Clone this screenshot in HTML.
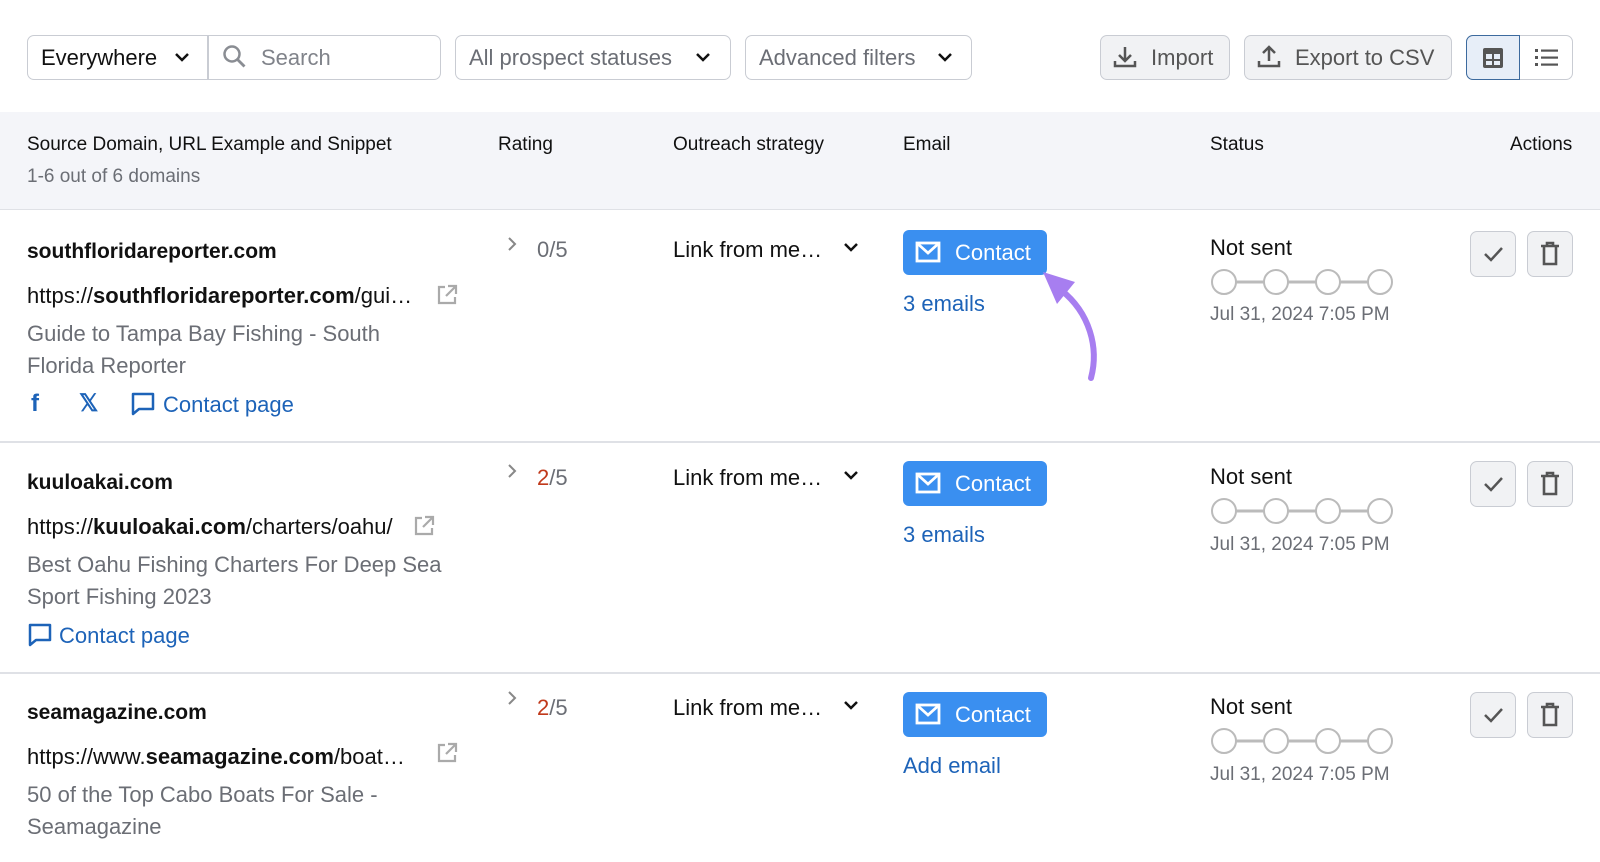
<!DOCTYPE html>
<html><head><meta charset="utf-8"><style>
*{box-sizing:border-box;margin:0;padding:0}
body{width:1600px;height:862px;overflow:hidden;background:#fff;font-family:"Liberation Sans",Arial,sans-serif;position:relative;color:#111}
.a{position:absolute;white-space:nowrap}
.box{position:absolute;border:1.5px solid #c9ccd3;border-radius:7px;background:#fff}
.btn{position:absolute;border:1.5px solid #c9ccd3;border-radius:7px;background:#f1f2f4}
.hdr{position:absolute;left:0;top:112px;width:1600px;height:98px;background:#f4f5f9;border-bottom:1.5px solid #dfe1e6}
.h{font-size:19px;color:#111}
.line{position:absolute;left:0;width:1600px;height:1.5px;background:#dfe1e6}
.dom{font-size:21px;font-weight:bold}
.url{font-size:22px}
.snip{font-size:22px;color:#6b6e75;line-height:32px;white-space:normal}
.link{color:#1d63b8;font-size:22px}
.contact{position:absolute;width:144px;height:45px;background:#3a8ff0;border-radius:6px;color:#fff;font-size:22px}
.dots{position:absolute;width:186px;height:28px}
.act{position:absolute;width:46px;height:46px;border:1.5px solid #c9ccd3;border-radius:7px;background:#f1f2f4}
.gray{color:#6b6e75}
</style></head><body>

<!-- toolbar -->
<div class="box" style="left:27px;top:35px;width:414px;height:45px"></div>
<div class="a" style="left:207px;top:36px;width:1.5px;height:43px;background:#c9ccd3"></div>
<div class="a" style="left:41px;top:45px;font-size:22px">Everywhere</div>
<svg class="a" style="left:173px;top:50px" width="18" height="14"><path d="M3 4l6 6 6-6" stroke="#111" stroke-width="2.5" fill="none"/></svg>
<svg class="a" style="left:222px;top:44px" width="26" height="26"><circle cx="10" cy="10" r="7.5" stroke="#8a8d93" stroke-width="2.5" fill="none"/><path d="M15.5 15.5l7 7" stroke="#8a8d93" stroke-width="2.8"/></svg>
<div class="a gray" style="left:261px;top:45px;font-size:22px;color:#80838a">Search</div>

<div class="box" style="left:455px;top:35px;width:276px;height:45px"></div>
<div class="a" style="left:469px;top:45px;font-size:22px;color:#6b6e75">All prospect statuses</div>
<svg class="a" style="left:694px;top:50px" width="18" height="14"><path d="M3 4l6 6 6-6" stroke="#111" stroke-width="2.5" fill="none"/></svg>

<div class="box" style="left:745px;top:35px;width:227px;height:45px"></div>
<div class="a" style="left:759px;top:45px;font-size:22px;color:#6b6e75">Advanced filters</div>
<svg class="a" style="left:936px;top:50px" width="18" height="14"><path d="M3 4l6 6 6-6" stroke="#111" stroke-width="2.5" fill="none"/></svg>

<div class="btn" style="left:1100px;top:35px;width:130px;height:45px"></div>
<svg class="a" style="left:1112px;top:44px" width="26" height="26"><path d="M13 3v13M7 11l6 6 6-6M3 17v5h20v-5" stroke="#555" stroke-width="2.5" fill="none"/></svg>
<div class="a" style="left:1151px;top:45px;font-size:22px;color:#555">Import</div>

<div class="btn" style="left:1244px;top:35px;width:208px;height:45px"></div>
<svg class="a" style="left:1256px;top:44px" width="26" height="26"><path d="M13 17V4M7 9l6-6 6 6M3 17v5h20v-5" stroke="#555" stroke-width="2.5" fill="none"/></svg>
<div class="a" style="left:1295px;top:45px;font-size:22px;color:#555">Export to CSV</div>

<div class="box" style="left:1466px;top:35px;width:107px;height:45px"></div>
<div class="a" style="left:1466px;top:35px;width:54px;height:45px;background:#e7eef8;border:1.5px solid #3c6a9e;border-radius:7px 0 0 7px"></div>
<svg class="a" style="left:1481px;top:46px" width="24" height="24"><rect x="2" y="2" width="20" height="20" rx="2" fill="#555"/><rect x="5" y="8" width="6" height="5" fill="#e7eef8"/><rect x="13" y="8" width="6" height="5" fill="#e7eef8"/><rect x="5" y="15" width="6" height="4" fill="#e7eef8"/><rect x="13" y="15" width="6" height="4" fill="#e7eef8"/></svg>
<svg class="a" style="left:1534px;top:46px" width="26" height="24"><g fill="#555"><rect x="1" y="3" width="3" height="3"/><rect x="1" y="10" width="3" height="3"/><rect x="1" y="17" width="3" height="3"/><rect x="7" y="3.5" width="17" height="2.2"/><rect x="7" y="10.5" width="17" height="2.2"/><rect x="7" y="17.5" width="17" height="2.2"/></g></svg>

<!-- header -->
<div class="hdr"></div>
<div class="a h" style="left:27px;top:134px">Source Domain, URL Example and Snippet</div>
<div class="a h gray" style="left:27px;top:166px;color:#6b6e75">1-6 out of 6 domains</div>
<div class="a h" style="left:498px;top:134px">Rating</div>
<div class="a h" style="left:673px;top:134px">Outreach strategy</div>
<div class="a h" style="left:903px;top:134px">Email</div>
<div class="a h" style="left:1210px;top:134px">Status</div>
<div class="a h" style="left:1510px;top:134px">Actions</div>

<div class="line" style="top:441px"></div>
<div class="line" style="top:672px"></div>

<!-- ROW 1 -->
<div class="a dom" style="left:27px;top:240px">southfloridareporter.com</div>
<div class="a url" style="left:27px;top:283px">https://<b>southfloridareporter.com</b>/gui…</div>
<svg class="a" style="left:435px;top:283px" width="24" height="24"><path d="M10 4H4v16h16v-6M13 3h8v8M21 3l-10 10" stroke="#aaa" stroke-width="2.2" fill="none"/></svg>
<div class="a snip" style="left:27px;top:318px;width:405px">Guide to Tampa Bay Fishing - South Florida Reporter</div>
<div class="a" style="left:31px;top:390px;font-size:24px;font-weight:bold;color:#1d63b8">f</div>
<div class="a" style="left:79px;top:389px;font-size:24px;font-weight:bold;color:#1d63b8">𝕏</div>
<svg class="a" style="left:130px;top:391px" width="26" height="26"><path d="M3 3h20v15H9l-6 5z" stroke="#1d63b8" stroke-width="2.5" fill="none" stroke-linejoin="round"/></svg>
<div class="a link" style="left:163px;top:392px">Contact page</div>

<!-- ROW 2 -->
<div class="a dom" style="left:27px;top:471px">kuuloakai.com</div>
<div class="a url" style="left:27px;top:514px">https://<b>kuuloakai.com</b>/charters/oahu/</div>
<svg class="a" style="left:412px;top:514px" width="24" height="24"><path d="M10 4H4v16h16v-6M13 3h8v8M21 3l-10 10" stroke="#aaa" stroke-width="2.2" fill="none"/></svg>
<div class="a snip" style="left:27px;top:549px;width:440px">Best Oahu Fishing Charters For Deep Sea Sport Fishing 2023</div>
<svg class="a" style="left:27px;top:622px" width="26" height="26"><path d="M3 3h20v15H9l-6 5z" stroke="#1d63b8" stroke-width="2.5" fill="none" stroke-linejoin="round"/></svg>
<div class="a link" style="left:59px;top:623px">Contact page</div>

<!-- ROW 3 -->
<div class="a dom" style="left:27px;top:701px">seamagazine.com</div>
<div class="a url" style="left:27px;top:744px">https://www.<b>seamagazine.com</b>/boat…</div>
<svg class="a" style="left:435px;top:741px" width="24" height="24"><path d="M10 4H4v16h16v-6M13 3h8v8M21 3l-10 10" stroke="#aaa" stroke-width="2.2" fill="none"/></svg>
<div class="a snip" style="left:27px;top:779px;width:420px">50 of the Top Cabo Boats For Sale - Seamagazine</div>

<!-- rating -->
<svg class="a" style="left:506px;top:235px" width="12" height="18"><path d="M3 3l6 6-6 6" stroke="#888" stroke-width="2" fill="none"/></svg>
<div class="a" style="left:537px;top:237px;font-size:22px;color:#6b6e75">0/5</div>
<svg class="a" style="left:506px;top:462px" width="12" height="18"><path d="M3 3l6 6-6 6" stroke="#888" stroke-width="2" fill="none"/></svg>
<div class="a" style="left:537px;top:465px;font-size:22px;color:#6b6e75"><span style="color:#c0391b">2</span>/5</div>
<svg class="a" style="left:506px;top:689px" width="12" height="18"><path d="M3 3l6 6-6 6" stroke="#888" stroke-width="2" fill="none"/></svg>
<div class="a" style="left:537px;top:695px;font-size:22px;color:#6b6e75"><span style="color:#c0391b">2</span>/5</div>

<!-- strategy -->
<div class="a" style="left:673px;top:237px;font-size:22px">Link from me…</div>
<svg class="a" style="left:842px;top:240px" width="18" height="14"><path d="M3 4l6 6 6-6" stroke="#111" stroke-width="2.5" fill="none"/></svg>
<div class="a" style="left:673px;top:465px;font-size:22px">Link from me…</div>
<svg class="a" style="left:842px;top:468px" width="18" height="14"><path d="M3 4l6 6 6-6" stroke="#111" stroke-width="2.5" fill="none"/></svg>
<div class="a" style="left:673px;top:695px;font-size:22px">Link from me…</div>
<svg class="a" style="left:842px;top:698px" width="18" height="14"><path d="M3 4l6 6 6-6" stroke="#111" stroke-width="2.5" fill="none"/></svg>

<!-- contact buttons -->
<div class="contact" style="left:903px;top:230px"><svg class="a" style="left:12px;top:11px" width="26" height="22"><rect x="2" y="2" width="22" height="18" stroke="#fff" stroke-width="2.8" fill="none"/><path d="M3 3l10 9 10-9" stroke="#fff" stroke-width="2.8" fill="none"/></svg><span class="a" style="left:52px;top:10px">Contact</span></div>
<div class="a link" style="left:903px;top:291px">3 emails</div>
<div class="contact" style="left:903px;top:461px"><svg class="a" style="left:12px;top:11px" width="26" height="22"><rect x="2" y="2" width="22" height="18" stroke="#fff" stroke-width="2.8" fill="none"/><path d="M3 3l10 9 10-9" stroke="#fff" stroke-width="2.8" fill="none"/></svg><span class="a" style="left:52px;top:10px">Contact</span></div>
<div class="a link" style="left:903px;top:522px">3 emails</div>
<div class="contact" style="left:903px;top:692px"><svg class="a" style="left:12px;top:11px" width="26" height="22"><rect x="2" y="2" width="22" height="18" stroke="#fff" stroke-width="2.8" fill="none"/><path d="M3 3l10 9 10-9" stroke="#fff" stroke-width="2.8" fill="none"/></svg><span class="a" style="left:52px;top:10px">Contact</span></div>
<div class="a link" style="left:903px;top:753px">Add email</div>

<!-- arrow -->
<svg class="a" style="left:1035px;top:268px" width="70" height="115"><path d="M56 110C64 80 55 45 26 22" stroke="#a77ef0" stroke-width="6" fill="none" stroke-linecap="round"/><path d="M8 4L40 14 22 36z" fill="#a77ef0"/></svg>

<!-- status -->
<div class="a" style="left:1210px;top:235px;font-size:22px">Not sent</div>
<svg class="a dots" style="left:1210px;top:268px"><path d="M26 14h28M78 14h28M130 14h28" stroke="#bbb" stroke-width="3"/><g stroke="#bbb" stroke-width="2" fill="#fff"><circle cx="14" cy="14" r="12"/><circle cx="66" cy="14" r="12"/><circle cx="118" cy="14" r="12"/><circle cx="170" cy="14" r="12"/></g></svg>
<div class="a" style="left:1210px;top:304px;font-size:19px;color:#6b6e75">Jul 31, 2024 7:05 PM</div>
<div class="a" style="left:1210px;top:464px;font-size:22px">Not sent</div>
<svg class="a dots" style="left:1210px;top:497px"><path d="M26 14h28M78 14h28M130 14h28" stroke="#bbb" stroke-width="3"/><g stroke="#bbb" stroke-width="2" fill="#fff"><circle cx="14" cy="14" r="12"/><circle cx="66" cy="14" r="12"/><circle cx="118" cy="14" r="12"/><circle cx="170" cy="14" r="12"/></g></svg>
<div class="a" style="left:1210px;top:534px;font-size:19px;color:#6b6e75">Jul 31, 2024 7:05 PM</div>
<div class="a" style="left:1210px;top:694px;font-size:22px">Not sent</div>
<svg class="a dots" style="left:1210px;top:727px"><path d="M26 14h28M78 14h28M130 14h28" stroke="#bbb" stroke-width="3"/><g stroke="#bbb" stroke-width="2" fill="#fff"><circle cx="14" cy="14" r="12"/><circle cx="66" cy="14" r="12"/><circle cx="118" cy="14" r="12"/><circle cx="170" cy="14" r="12"/></g></svg>
<div class="a" style="left:1210px;top:764px;font-size:19px;color:#6b6e75">Jul 31, 2024 7:05 PM</div>

<!-- actions -->
<div class="act" style="left:1470px;top:231px"><svg class="a" style="left:11px;top:12px" width="22" height="20"><path d="M3 10l6 6 11-12" stroke="#555" stroke-width="2.5" fill="none"/></svg></div>
<div class="act" style="left:1527px;top:231px"><svg class="a" style="left:11px;top:9px" width="22" height="26"><path d="M2 5h18M8 5V2h6v3M5 5v18h12V5" stroke="#555" stroke-width="2.6" fill="none"/></svg></div>
<div class="act" style="left:1470px;top:461px"><svg class="a" style="left:11px;top:12px" width="22" height="20"><path d="M3 10l6 6 11-12" stroke="#555" stroke-width="2.5" fill="none"/></svg></div>
<div class="act" style="left:1527px;top:461px"><svg class="a" style="left:11px;top:9px" width="22" height="26"><path d="M2 5h18M8 5V2h6v3M5 5v18h12V5" stroke="#555" stroke-width="2.6" fill="none"/></svg></div>
<div class="act" style="left:1470px;top:692px"><svg class="a" style="left:11px;top:12px" width="22" height="20"><path d="M3 10l6 6 11-12" stroke="#555" stroke-width="2.5" fill="none"/></svg></div>
<div class="act" style="left:1527px;top:692px"><svg class="a" style="left:11px;top:9px" width="22" height="26"><path d="M2 5h18M8 5V2h6v3M5 5v18h12V5" stroke="#555" stroke-width="2.6" fill="none"/></svg></div>

</body></html>
